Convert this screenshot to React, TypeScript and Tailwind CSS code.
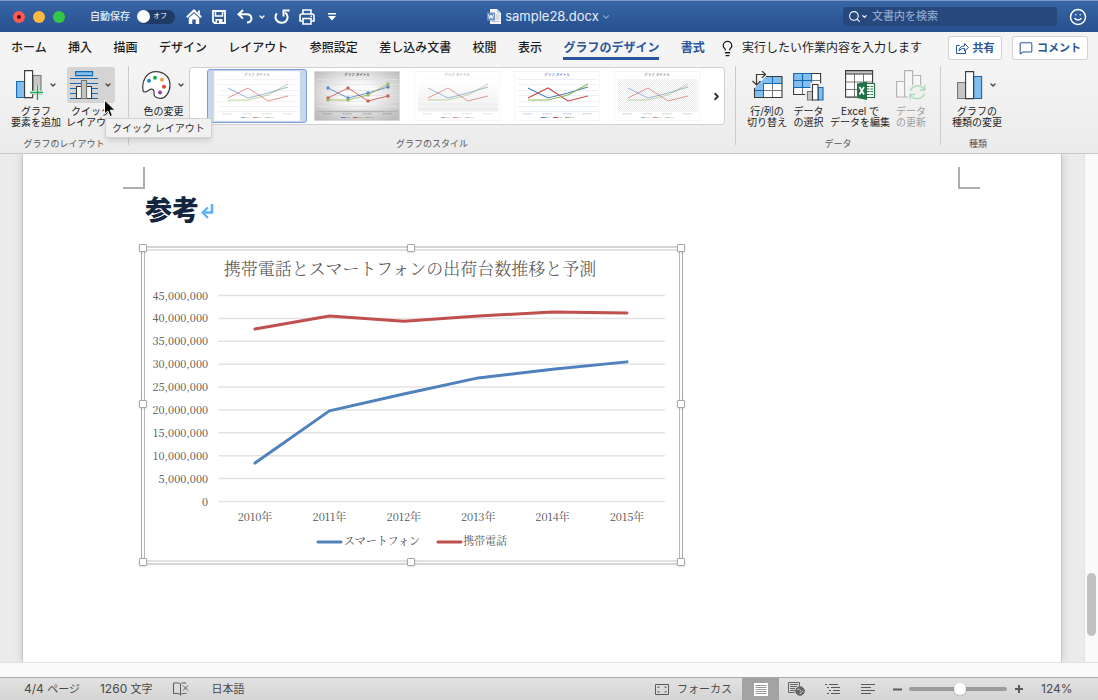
import { ChevronDown, ChevronRight, Lightbulb, MessageSquare, Search, Smile } from 'lucide-react';
import type { ReactNode } from 'react';

const YEARS = ['2010年', '2011年', '2012年', '2013年', '2014年', '2015年'];
const SMARTPHONE = [8.4, 19.8, 23.5, 27, 28.9, 30.5];
const MOBILE = [37.7, 40.5, 39.4, 40.5, 41.4, 41.2];
const TICKS = [45, 40, 35, 30, 25, 20, 15, 10, 5, 0];

const TABS = ['ホーム', '挿入', '描画', 'デザイン', 'レイアウト', '参照設定', '差し込み文書', '校閲', '表示', 'グラフのデザイン', '書式'];

/* ---------- title bar ---------- */

function HomeIcon() {
  return (
    <svg width="16" height="16" viewBox="0 0 16 16" fill="none">
      <path d="M.8 8.2 8 1.4l7.2 6.8" stroke="#fff" strokeWidth="2" />
      <path d="M12 1.5h2v4l-2-2z" fill="#fff" />
      <path d="M2.8 9 8 4.2 13.2 9v6H9.700v-4.500H6.300V15H2.800z" fill="#fff" />
    </svg>
  );
}

function SaveIcon() {
  return (
    <svg width="14" height="14" viewBox="0 0 14 14" fill="none" stroke="#fff" strokeWidth="1.8">
      <path d="M1 1h12v12H2.500L1 11.500z" />
      <path d="M3.500 1v5h7V1" strokeWidth="1.5" />
      <path d="M3.500 9h7v4h-7z" fill="#fff" stroke="none" />
      <path d="M5 10.500h2V13H5z" fill="#2f5c9f" stroke="none" />
    </svg>
  );
}

function UndoIcon() {
  return (
    <svg width="16" height="15" viewBox="0 0 16 15" fill="none" stroke="#fff" strokeWidth="2">
      <path d="M6 1 1.500 5.300 6 9.600" />
      <path d="M2 5.300h7.500c6.500 0 6.500 8.200.5 8.200" />
    </svg>
  );
}

function RedoIcon() {
  return (
    <svg width="16" height="15" viewBox="0 0 16 15" fill="none" stroke="#fff" strokeWidth="2">
      <path d="M2.800 4.200C-.5 9 3 13.800 7.500 13.800c6 0 8-6.800 3.700-10.300" />
      <path d="M9.500 7.500V1.500H15.500" />
    </svg>
  );
}

function PrintIcon() {
  return (
    <svg width="16" height="16" viewBox="0 0 16 16" fill="none" stroke="#fff" strokeWidth="1.6">
      <path d="M4 5V1h8v4M3.500 12H1V7q0-2 2-2h10q2 0 2 2v5h-2.500" />
      <path d="M4 9.500h8V15H4z" />
      <path d="M11.500 7.300h1.500" />
    </svg>
  );
}

function DocIcon() {
  return (
    <svg width="14" height="15" viewBox="0 0 14 15">
      <path d="M3 0h7l4 4v11H3z" fill="#f4f6fa" />
      <path d="M10 0v4h4z" fill="#c5cfdf" />
      <path d="M8.500 6h4M8.500 8h4M8.500 10h4M5 12.500h7.500" stroke="#a9b4c6" strokeWidth=".8" />
      <rect y="3.5" width="8" height="8" fill="#6f8fc4" />
      <path d="m1.500 5.500 1.200 4L4 6.200l1.300 3.300 1.200-4" fill="none" stroke="#fff" />
    </svg>
  );
}

function TitleBar() {
  return (
    <header className="grid h-8 grid-cols-[1fr_auto_1fr] items-center border-t border-[#7d9bc6] bg-linear-to-b from-[#3866a6] to-[#27508f] text-white">
      <div className="flex items-center pl-[13px]">
        <div className="flex gap-2">
          <button aria-label="閉じる" className="flex size-3 items-center justify-center rounded-full bg-[#fc5b57]">
            <span className="size-1 rounded-full bg-[#5c0a08]" />
          </button>
          <button aria-label="しまう" className="size-3 rounded-full bg-[#fdb93e]" />
          <button aria-label="拡大" className="size-3 rounded-full bg-[#33c748]" />
        </div>
        <span className="ml-[25px] text-[10px] font-medium text-[#e4ebf5]">自動保存</span>
        <button role="switch" aria-checked="false" aria-label="自動保存" className="ml-[7px] flex h-[14px] w-[38px] items-center rounded-full bg-[#1f3b66]">
          <span className="size-[13px] rounded-full bg-white" />
          <span className="ml-[3px] text-[7px]">オフ</span>
        </button>
        <button aria-label="ホーム" className="ml-[11px]"><HomeIcon /></button>
        <button aria-label="保存" className="ml-[10px]"><SaveIcon /></button>
        <button aria-label="元に戻す" className="ml-[11px]"><UndoIcon /></button>
        <button aria-label="元に戻すの履歴" className="ml-[5px]"><ChevronDown size={8} strokeWidth={4} /></button>
        <button aria-label="やり直し" className="ml-2"><RedoIcon /></button>
        <button aria-label="印刷" className="ml-[9px]"><PrintIcon /></button>
        <button aria-label="カスタマイズ" className="ml-[13px]">
          <svg width="8" height="8" viewBox="0 0 8 8" fill="#fff">
            <path d="M0 0h8v1.500H0zM0 3h8L4 7.500z" />
          </svg>
        </button>
      </div>
      <div className="flex items-center">
        <DocIcon />
        <h1 className="ml-1 text-[13px] text-[#e8eef7]">sample28.docx</h1>
        <ChevronDown size={10} strokeWidth={3} className="ml-[2px] text-[#7f9ccb]" />
      </div>
      <div className="flex items-center justify-end pr-[11px]">
        <label className="flex h-[19px] w-[214px] items-center rounded-[3px] bg-[#26487c] pl-[5px]">
          <Search size={13} strokeWidth={2} />
          <ChevronDown size={7} strokeWidth={4} />
          <input type="search" aria-label="文書内を検索" placeholder="文書内を検索" className="ml-1 min-w-0 flex-1 bg-transparent text-[11px] font-medium outline-none placeholder:text-[#8fa6cb]" />
        </label>
        <button aria-label="フィードバック" className="ml-3"><Smile size={18} strokeWidth={2} /></button>
      </div>
    </header>
  );
}

/* ---------- tabs ---------- */

function tabClass(name: string) {
  if (name === 'グラフのデザイン') return 'h-6 border-b-3 border-[#2b579a] pt-[2px] font-bold text-[#2b579a]';
  if (name === '書式') return 'h-6 border-b-3 border-transparent pt-[2px] font-bold text-[#2b579a]';
  return 'h-6 border-b-3 border-transparent pt-[2px] font-medium text-[#1c1c1c]';
}

function TabRow() {
  return (
    <div className="flex h-8 items-center bg-[#f4f4f4] pr-[10px] pl-[11px] text-[12px]">
      <nav className="flex w-[694px] shrink-0 justify-between whitespace-nowrap">
        {TABS.map((t) => (
          <button key={t} className={tabClass(t)}>{t}</button>
        ))}
      </nav>
      <button className="ml-[14px] flex items-center gap-[6px] whitespace-nowrap text-[#1c1c1c]">
        <Lightbulb size={17} strokeWidth={1.8} />
        実行したい作業内容を入力します
      </button>
      <div className="ml-auto flex gap-[10px] text-[11px] font-bold text-[#2b579a]">
        <button className="flex h-6 w-[54px] items-center justify-center gap-1 rounded-[3px] border border-[#d2d2d2] bg-white">
          <svg width="13" height="12" viewBox="0 0 13 12" fill="none" stroke="#2b579a">
            <path d="M3.500 3.500h-3v8h9V8.500M3 9c.3-3.500 2.200-5 5.500-5V1.500l4 4-4 3.500V6.500C5.700 6.500 4.200 7.200 3 9z" />
          </svg>
          共有
        </button>
        <button className="flex h-6 w-[76px] items-center justify-center gap-1 rounded-[3px] border border-[#d2d2d2] bg-white whitespace-nowrap">
          <MessageSquare size={14} strokeWidth={1.8} />
          コメント
        </button>
      </div>
    </div>
  );
}

/* ---------- ribbon icons ---------- */

function AddElementIcon() {
  return (
    <svg width="27" height="31" viewBox="0 0 27 31" strokeWidth="1.1">
      <path d="M17 5.500h8V24h-8z" fill="#c8c6c4" stroke="#797774" />
      <path d="M.6 11.500H9v16H.6z" fill="#83beec" stroke="#1069b8" />
      <path d="M8.600.6h8v27h-8z" fill="#fff" stroke="#3a3a38" />
      <path d="M21.500 15v15M14 22.500h15" stroke="#f0f0f0" strokeWidth="3.5" />
      <path d="M21.500 15v15M14 22.500h13" stroke="#18ab50" strokeWidth="1.4" />
    </svg>
  );
}

function QuickLayoutIcon() {
  return (
    <svg width="28" height="29" viewBox="0 0 28 29" strokeWidth="1.1">
      <path d="M5.600.6h17v4h-17z" fill="#83beec" stroke="#1069b8" />
      <path d="M0 7.500h28M0 12.500h28M0 17.500h28M0 22.500h28M0 27.500h28" stroke="#1069b8" />
      <path d="M6.500 15.500h5v12h-5zM16.500 15.500h5v12h-5z" fill="#fff" stroke="#3a3a38" />
      <path d="M11.500 9.500h5v18h-5z" fill="#c8c6c4" stroke="#797774" />
    </svg>
  );
}

function PaletteIcon() {
  return (
    <svg width="29" height="28" viewBox="0 0 29 28">
      <path
        d="M1 19C-.5 9 5 .6 14 .6c8 0 14 5.400 14 13.400 0 8-5 13.300-9 13.300-4 .2-7-1.300-7-4.300 0-1.500.5-3-1-4.500-3-2-5 2.500-8 2.500-1.500 0-2-1-2-2z"
        fill="#fff" stroke="#3a3a38" strokeWidth="1.2"
      />
      <circle cx="7" cy="9.7" r="2" fill="#1e8bcd" />
      <circle cx="13" cy="6.7" r="2" fill="#18ab50" />
      <circle cx="20" cy="8.7" r="2" fill="#fb983b" />
      <circle cx="22" cy="15.7" r="2" fill="#ed3d3b" />
      <circle cx="18" cy="21.5" r="2" fill="#9a3aa8" />
    </svg>
  );
}

function SwitchRowColIcon() {
  return (
    <svg width="32" height="29" viewBox="0 0 32 29" fill="none">
      <path d="M13 5.500h18v21H3.500V15z" fill="#fff" />
      <path d="M15 5.500h16v7.500H12.500v13.500h-9V17z" fill="#83beec" />
      <path d="M12.500 19.500H31M21.500 12.500v14" stroke="#797774" />
      <path d="M21.500 5.500v7M3.500 19.500h9M12.500 26.500v-14H31" stroke="#1069b8" />
      <path d="M15 5.500h16v21H3.500V17" stroke="#3a3a38" strokeWidth="1.1" />
      <path d="M5.500 13.500V3.500h9" stroke="#3a3a38" strokeWidth="1.2" />
      <path d="m11 0 3.500 3.500L11 7M1.500 10l4 4 4-4" stroke="#3a3a38" strokeWidth="1.2" />
    </svg>
  );
}

function SelectDataIcon() {
  return (
    <svg width="31" height="31" viewBox="0 0 31 31" strokeWidth="1.1">
      <path d="M.6 3.500h27v21H.6z" fill="#fff" />
      <path d="M.6 3.500h18v14H.6z" fill="#83beec" />
      <path d="M18.600 10.500h9M9.500 17.500v7" fill="none" stroke="#797774" />
      <path d="M18.600 3.500h9v10M.6 17.500v7h12" fill="none" stroke="#3a3a38" />
      <path d="M.6 3.500h18v14H.6zM.6 10.500h18M9.500 3.500v14" fill="none" stroke="#1069b8" />
      <path d="M12.500 19.500h5v-7h8v2h5.500V31H12.500z" fill="#f0f0f0" />
      <path d="M14.500 21.500h5v8.500h-5z" fill="#c8c6c4" stroke="#797774" />
      <path d="M25 17.500h5V30h-5z" fill="#83beec" stroke="#1069b8" />
      <path d="M19.500 14.500H25V30h-5.500z" fill="#fff" stroke="#3a3a38" />
    </svg>
  );
}

function ExcelIcon() {
  return (
    <svg width="31" height="31" viewBox="0 0 31 31">
      <path d="M.6.6h27v26.500H.6z" fill="#fff" />
      <path d="M.6.6h27v3.500H.6z" fill="#c8c6c4" />
      <path d="M.6 12h27M.6 19.500h27M9.500 4v23M18.500 4v23" fill="none" stroke="#797774" />
      <path d="M.6.6h27v26.500H.6zM.6 4h27" fill="none" stroke="#3a3a38" strokeWidth="1.1" />
      <path d="M21 13.500h8.500v14H21z" fill="#fff" stroke="#217346" strokeWidth="1.2" />
      <path d="M22 16.500h6M22 19h6M22 21.500h6M22 24.500h6" stroke="#217346" strokeWidth="1.1" strokeDasharray="2.5 1" />
      <path d="m12 13.500 10-2v18.500l-10-2z" fill="#217346" />
      <path d="m14.500 17 4.500 7.500M19 17l-4.500 7.500" stroke="#fff" strokeWidth="1.6" />
    </svg>
  );
}

function RefreshDataIcon() {
  return (
    <svg width="30" height="31" viewBox="0 0 30 31" fill="none">
      <path d="M.6 11.500h8v15.500h-8zM8.600.6h8V27h-8zM16.600 5.500h8v20h-8z" fill="#f6f6f6" stroke="#b5b4b2" strokeWidth="1.2" />
      <path d="M12 15h18v16H12z" fill="#f0f0f0" />
      <path d="M14.600 21c1.500-6 10.500-7 13.700-1.500M28.300 23.500c-1.500 6-10.500 7-13.700 1.500" stroke="#a5dbb9" strokeWidth="1.3" />
      <path d="M28.800 15v5h-5M14 29.500v-5h5" stroke="#a5dbb9" strokeWidth="1.3" />
    </svg>
  );
}

function ChartTypeIcon() {
  return (
    <svg width="26" height="29" viewBox="0 0 26 29" strokeWidth="1.1">
      <path d="M.6 11.500h8v16h-8z" fill="#c8c6c4" stroke="#797774" />
      <path d="M16.600 5.500h8v22h-8z" fill="#83beec" stroke="#1069b8" />
      <path d="M8.600.6h8v27h-8z" fill="#fff" stroke="#3a3a38" />
    </svg>
  );
}

/* ---------- ribbon ---------- */

type ToolProps = {
  icon: ReactNode;
  lines: string[];
  menu?: boolean;
  active?: boolean;
  disabled?: boolean;
};

function Tool({ icon, lines, menu, active, disabled }: ToolProps) {
  return (
    <button disabled={disabled} className="flex shrink-0 flex-col items-center text-[10px] leading-[11px] whitespace-nowrap text-[#1c1c1c] disabled:text-[#9d9d9d]">
      <span className={`flex h-9 items-center gap-[6px] rounded-[3px] ${active ? 'w-12 justify-center bg-[#d4d4d4]' : ''}`}>
        {icon}
        {menu && <ChevronDown size={8} strokeWidth={4} className="text-[#444]" />}
      </span>
      <span className="mt-[3px] h-[22px]">
        {lines.map((l) => (
          <span key={l} className="block">{l}</span>
        ))}
      </span>
    </button>
  );
}

function Group({ label, className, children }: { label: string; className: string; children: ReactNode }) {
  return (
    <section className={`flex flex-col justify-between pt-[3px] pb-1 ${className}`}>
      <div className="flex">{children}</div>
      <h2 className="text-center text-[9px] leading-[11px] text-[#555]">{label}</h2>
    </section>
  );
}

const Divider = () => <div className="mt-[2px] mb-2 w-px shrink-0 bg-[#cbcbcb]" />;

type Thumb = { name: string; bg: string; title: string; grid: string; fade: number; width: number; dots?: boolean; hatch?: boolean; shade?: boolean };

const THUMBS: Thumb[] = [
  { name: 'スタイル 1', bg: '#fff', title: '#999', grid: '#f0f0f0', fade: 0.65, width: 0.9 },
  { name: 'スタイル 2', bg: 'url(#metal)', title: '#444', grid: '#e2e2e2', fade: 0.9, width: 0.9, dots: true },
  { name: 'スタイル 3', bg: '#fff', title: '#aaa', grid: '#fafafa', fade: 0.6, width: 0.9, shade: true },
  { name: 'スタイル 4', bg: '#fff', title: '#4a76b4', grid: '#e6edf6', fade: 1, width: 1.1 },
  { name: 'スタイル 5', bg: '#fff', title: '#777', grid: '#f4f4f4', fade: 0.6, width: 0.9, hatch: true },
];

const THUMB_LINES = [
  { color: '#4a80c4', ys: [17, 27, 22, 16] },
  { color: '#cc4b48', ys: [27, 17, 30, 25] },
  { color: '#93b856', ys: [29, 29, 24, 13] },
];

function StyleThumb({ t }: { t: Thumb }) {
  return (
    <svg width="86" height="50" viewBox="0 0 86 50">
      <defs>
        <radialGradient id="metal" cx="50%" cy="45%" r="65%">
          <stop offset="0.3" stopColor="#fafafa" />
          <stop offset="1" stopColor="#bdbdbd" />
        </radialGradient>
        <linearGradient id="shade" x1="0" y1="0" x2="0" y2="1">
          <stop offset="0" stopColor="#fff" />
          <stop offset="1" stopColor="#ececec" />
        </linearGradient>
        <pattern id="hatch" width="2" height="2" patternUnits="userSpaceOnUse">
          <path d="M0 0h1v1H0zM1 1h1v1H1z" fill="#e9e9e9" />
        </pattern>
      </defs>
      <rect width="86" height="50" fill={t.bg} stroke="#eee" />
      {t.shade && <rect x="4" y="10" width="80" height="31" fill="url(#shade)" />}
      {t.hatch && <rect x="4" y="8" width="80" height="33" fill="url(#hatch)" />}
      <text x="43" y="5" textAnchor="middle" fontSize="3.5" fontWeight="500" fill={t.title}>グラフ タイトル</text>
      {!t.hatch && [8, 13, 19, 24, 30, 35, 40].map((y) => (
        <path key={y} d={`M4 ${y + 0.5}h80`} stroke={t.grid} strokeWidth=".8" />
      ))}
      {t.dots && <path d="M3 40.500h81" stroke="#b5b5b5" strokeWidth="1.5" />}
      <path d="M9 42.800h9M29 42.800h9M49 42.800h9M69 42.800h9" stroke={t.title} strokeWidth="1" strokeDasharray="1 .7" opacity=".5" />
      {THUMB_LINES.map((l, i) => (
        <g key={l.color} opacity={t.fade}>
          <polyline points={l.ys.map((y, k) => `${14 + k * 20},${y}`).join(' ')} fill="none" stroke={l.color} strokeWidth={t.width} />
          {t.dots && l.ys.map((y, k) => <circle key={k} cx={14 + k * 20} cy={y} r="1.7" fill={l.color} />)}
          <path d={`M${27 + i * 12} 46.500h4.500`} stroke={l.color} strokeWidth="1" />
          <path d={`M${32 + i * 12} 46.500h4`} stroke="#777" strokeWidth="1" strokeDasharray="1 .6" opacity=".5" />
        </g>
      ))}
    </svg>
  );
}

function Ribbon() {
  return (
    <div className="relative flex h-[90px] border-b border-[#c6c6c6] bg-linear-to-b from-[#f4f4f4] to-[#ebebeb]">
      <Group label="グラフのレイアウト" className="w-[128px]">
        <div className="flex gap-[5px] pl-[11px]">
          <Tool icon={<AddElementIcon />} lines={['グラフ', '要素を追加']} menu />
          <Tool icon={<QuickLayoutIcon />} lines={['クイック', 'レイアウト']} menu active />
        </div>
      </Group>
      <Divider />
      <Group label="グラフのスタイル" className="w-[606px]">
        <div className="flex w-full pr-[10px] pl-[13px]">
          <Tool icon={<PaletteIcon />} lines={['色の変更']} menu />
          <div className="ml-1 flex h-[58px] flex-1 items-center rounded-[3px] border border-[#d0d0d0] bg-white pl-[17px]">
            {THUMBS.map((t, i) => (
              <button
                key={t.name}
                aria-label={t.name}
                className={`flex h-[54px] w-[100px] shrink-0 items-center justify-center rounded-[3px] ${i === 0 ? 'border border-[#7b9fd4] bg-[#c9d7ec]' : ''}`}
              >
                <StyleThumb t={t} />
              </button>
            ))}
            <button aria-label="次のスタイル" className="ml-1"><ChevronRight size={11} strokeWidth={4} className="text-[#333]" /></button>
          </div>
        </div>
      </Group>
      <Divider />
      <Group label="データ" className="w-[204px]">
        <div className="flex gap-[6px] pl-[11px]">
          <Tool icon={<SwitchRowColIcon />} lines={['行/列の', '切り替え']} />
          <Tool icon={<SelectDataIcon />} lines={['データ', 'の選択']} />
          <Tool icon={<ExcelIcon />} lines={['Excel で', 'データを編集']} />
          <Tool icon={<RefreshDataIcon />} lines={['データ', 'の更新']} disabled />
        </div>
      </Group>
      <Divider />
      <Group label="種類" className="w-[74px]">
        <div className="pl-[11px]">
          <Tool icon={<ChartTypeIcon />} lines={['グラフの', '種類の変更']} menu />
        </div>
      </Group>

      <div role="tooltip" className="absolute top-[54px] left-[105px] z-10 border border-[#d0d0d0] bg-[#f1f1f1] px-[6px] text-[10px] leading-[18px] whitespace-nowrap text-[#333] shadow-md">
        クイック レイアウト
      </div>
      <svg className="absolute top-[35px] left-[103px] z-20" width="14" height="19" viewBox="0 0 14 19">
        <path d="M1.500 1v14l3.300-3 2.200 5.500 2.500-1-2.300-5.300H12z" fill="#000" stroke="#fff" />
      </svg>
    </div>
  );
}

/* ---------- document ---------- */

const plotX = (i: number) => 110 + i * 74.4;
const plotY = (v: number) => 250.5 - (v * 206) / 45;
const linePoints = (vals: number[]) => vals.map((v, i) => `${plotX(i)},${plotY(v)}`).join(' ');

function LineChart() {
  return (
    <svg width="534" height="309" viewBox="0 0 534 309" className="block font-['Noto_Serif_CJK_JP','Liberation_Serif',serif]" fill="#505050">
      <text x="265" y="24" textAnchor="middle" fontSize="17" fontWeight="300">携帯電話とスマートフォンの出荷台数推移と予測</text>
      {TICKS.map((v) => (
        <g key={v}>
          <path d={`M73 ${plotY(v)}h447`} stroke="#e3e3e3" strokeWidth="1.5" />
          <text x="63" y={plotY(v) + 4} textAnchor="end" fontSize="11">{(v * 1000000).toLocaleString('en-US')}</text>
        </g>
      ))}
      {YEARS.map((y, i) => (
        <text key={y} x={plotX(i)} y="270" textAnchor="middle" fontSize="11">{y}</text>
      ))}
      <g fill="none" strokeWidth="3" strokeLinecap="round" strokeLinejoin="round">
        <polyline points={linePoints(MOBILE)} stroke="#c0504d" />
        <polyline points={linePoints(SMARTPHONE)} stroke="#4f81bd" />
        <path d="M173 291h23" stroke="#4f81bd" />
        <path d="M293 291h23" stroke="#c0504d" />
      </g>
      <text x="199" y="294" fontSize="11">スマートフォン</text>
      <text x="318" y="294" fontSize="11">携帯電話</text>
    </svg>
  );
}

const HANDLES = [
  '-top-1 -left-[3px]',
  '-top-1 left-[265px]',
  '-top-1 -right-[3px]',
  'top-[152px] -left-[3px]',
  'top-[152px] -right-[3px]',
  '-bottom-[3px] -left-[3px]',
  '-bottom-[3px] left-[265px]',
  '-bottom-[3px] -right-[3px]',
];

function DocumentArea() {
  return (
    <main className="flex flex-1 bg-[#ebebeb]">
      <article className="mx-[22px] flex-1 border-x border-[#c4c4c4] bg-white pt-[13px] shadow-[0_0_8px_#c8c8c8]">
        <div className="flex justify-between pr-[81px] pl-[100px]">
          <div className="size-[22px] border-r-2 border-b-2 border-[#adadad]" />
          <div className="size-[22px] border-b-2 border-l-2 border-[#adadad]" />
        </div>
        <h2 className="mt-[6px] ml-[122px] flex items-center gap-[2px] text-[27px] leading-[32px] font-black text-[#14263f]">
          参考
          <svg width="13" height="15" viewBox="0 0 13 15" fill="none">
            <path d="M11 0v8.500H3" stroke="#5ab1fb" strokeWidth="2.5" />
            <path d="M7 3.500 1.500 8.500 7 14" stroke="#5ab1fb" strokeWidth="2.2" />
          </svg>
        </h2>
        <figure className="relative mt-[19px] ml-[118px] w-[542px] border-x border-y-2 border-x-[#a9a9a9] border-y-[#d6d6d6] px-[2px] py-[1px]">
          <div className="border-x border-y-2 border-x-[#b8b8b8] border-y-[#e2e2e2]">
            <LineChart />
          </div>
          {HANDLES.map((pos) => (
            <span key={pos} className={`absolute size-2 rounded-[1px] border border-[#a6a6a6] bg-white shadow-sm ${pos}`} />
          ))}
        </figure>
      </article>
      <div className="flex w-[14px] flex-col items-center border-l border-[#e2e2e2] bg-[#fafafa]">
        <div className="mt-auto mb-[26px] h-[63px] w-[9px] rounded-full bg-[#c1c1c1]" />
      </div>
    </main>
  );
}

/* ---------- status bar ---------- */

function StatusBar() {
  return (
    <footer className="flex h-[23px] items-stretch border-t border-[#a8a8a8] bg-linear-to-b from-[#e2e2e2] to-[#d4d4d4] pl-6 text-[11px] text-[#4a4a4a]">
      <button><span className="text-[12px]">4/4 </span>ページ</button>
      <button className="ml-5"><span className="text-[12px]">1260 </span>文字</button>
      <button aria-label="文章校正" className="ml-5">
        <svg width="17" height="14" viewBox="0 0 17 14" fill="none" stroke="#5a5a5a">
          <path d="M7.500 2v11M7.500 2C6.500 1 5 .8.500 1v10.500c4-.3 6 0 7 1.500 1-1.500 3-1.700 6-1.500M7.500 2C8.500 1 10 .8 13 1M10 3.500l5 5M15 3.500l-5 5" />
        </svg>
      </button>
      <button className="ml-[22px]">日本語</button>
      <div className="ml-auto flex items-stretch">
        <button className="flex items-center gap-2">
          <svg width="14" height="11" viewBox="0 0 14 11" fill="none" stroke="#5a5a5a">
            <path d="M.5.5h13v10H.5zM3 4V3h1.500M9.500 3H11v1M11 7v1H9.500M4.500 8H3V7" />
          </svg>
          フォーカス
        </button>
        <button aria-label="印刷レイアウト" className="ml-[10px] flex w-[37px] items-center justify-center bg-[#a3a3a3]">
          <svg width="14" height="13" viewBox="0 0 14 13">
            <path d="M0 0h14v13H0z" fill="#fff" />
            <path d="M1.500 2.500h11M1.500 4.500h11M1.500 6.500h11M1.500 8.500h11M1.500 10.500h11" stroke="#9a9a9a" />
          </svg>
        </button>
        <button aria-label="Web レイアウト" className="ml-[9px]">
          <svg width="17" height="14" viewBox="0 0 17 14" fill="none" stroke="#666">
            <path d="M.5.500h11v4M.5.500v10h6M2 2.500h8M2 4.500h7M2 6.500h5M2 8.500h5" />
            <circle cx="12" cy="9" r="4.3" fill="#666" />
            <path d="M9.500 7.500c2-1.500 2 1.500 3.500 1M12 12c0-2 2-1 3-3" stroke="#ddd" />
          </svg>
        </button>
        <button aria-label="アウトライン" className="ml-5">
          <svg width="15" height="11" viewBox="0 0 15 11" stroke="#5a5a5a">
            <path d="M0 .5h2M4 .5h9M2 3.500h2M6 3.500h9M4 6.500h2M8 6.500h7M2 9.500h2M6 9.500h9" />
          </svg>
        </button>
        <button aria-label="下書き" className="ml-[21px]">
          <svg width="14" height="11" viewBox="0 0 14 11" stroke="#5a5a5a">
            <path d="M0 .5h14M0 3.500h10M0 6.500h14M0 9.500h10" />
          </svg>
        </button>
        <button aria-label="縮小" className="ml-[18px]">
          <svg width="9" height="9" viewBox="0 0 9 9"><path d="M0 4.500h9" stroke="#5a5a5a" strokeWidth="2" /></svg>
        </button>
        <input
          type="range"
          aria-label="ズーム"
          defaultValue={52}
          className="my-auto mr-2 ml-[7px] h-1 w-[98px] appearance-none rounded-full bg-[#9c9c9c] [&::-webkit-slider-thumb]:size-3 [&::-webkit-slider-thumb]:appearance-none [&::-webkit-slider-thumb]:rounded-full [&::-webkit-slider-thumb]:bg-white [&::-webkit-slider-thumb]:shadow"
        />
        <button aria-label="拡大">
          <svg width="8" height="8" viewBox="0 0 8 8"><path d="M0 4h8M4 0v8" stroke="#5a5a5a" strokeWidth="2" /></svg>
        </button>
        <button className="ml-[18px] w-[57px] text-left text-[12px]">124%</button>
      </div>
    </footer>
  );
}

export default function App() {
  return (
    <div className="flex min-h-screen flex-col bg-white font-['Inter','Noto_Sans_CJK_JP',sans-serif]">
      <TitleBar />
      <TabRow />
      <Ribbon />
      <DocumentArea />
      <div className="h-[15px] border-t border-[#e2e2e2] bg-[#fafafa]" />
      <StatusBar />
    </div>
  );
}
